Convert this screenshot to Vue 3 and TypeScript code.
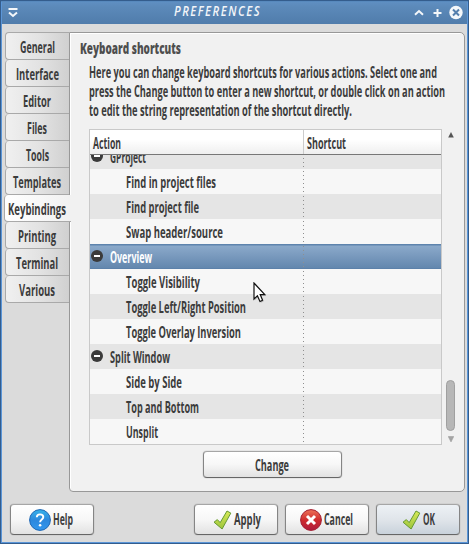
<script setup lang="ts">
import { h } from 'vue'

interface Tab { name: string; width: number }
interface Row { name: string; width: number; group?: boolean; selected?: boolean }

/** Condensed text line: squeezed to the given width, baseline 15.5px below its top. */
const Label = (props: { text: string; w: number }) =>
  h('svg', { class: 'label', width: props.w, height: 20 }, [
    h('text', { x: 0, y: 15.5, textLength: props.w, lengthAdjust: 'spacingAndGlyphs' }, props.text),
  ])
Label.props = ['text', 'w']

const tabs: Tab[] = [
  { name: 'General', width: 35 },
  { name: 'Interface', width: 43 },
  { name: 'Editor', width: 28 },
  { name: 'Files', width: 20 },
  { name: 'Tools', width: 23 },
  { name: 'Templates', width: 48 },
  { name: 'Keybindings', width: 58 },
  { name: 'Printing', width: 38 },
  { name: 'Terminal', width: 42 },
  { name: 'Various', width: 36 },
]

const intro: Tab[] = [
  { name: 'Here you can change keyboard shortcuts for various actions. Select one and', width: 348 },
  { name: 'press the Change button to enter a new shortcut, or double click on an action', width: 356 },
  { name: 'to edit the string representation of the shortcut directly.', width: 263 },
]

const rows: Row[] = [
  { name: 'GProject', width: 36, group: true },
  { name: 'Find in project files', width: 90 },
  { name: 'Find project file', width: 73 },
  { name: 'Swap header/source', width: 97 },
  { name: 'Overview', width: 42, group: true, selected: true },
  { name: 'Toggle Visibility', width: 74 },
  { name: 'Toggle Left/Right Position', width: 120 },
  { name: 'Toggle Overlay Inversion', width: 115 },
  { name: 'Split Window', width: 60, group: true },
  { name: 'Side by Side', width: 56 },
  { name: 'Top and Bottom', width: 73 },
  { name: 'Unsplit', width: 32 },
]
</script>

<template>
  <div class="window">
    <header class="titlebar">
      <svg class="menu" width="10" height="10" viewBox="0 0 10 10">
        <path d="M0.5 1H9.5" stroke="#f4f7fa" stroke-width="2" />
        <path d="M1 4.5L5 8L9 4.5" fill="none" stroke="#f4f7fa" stroke-width="2" />
      </svg>
      <Label class="caption" text="PREFERENCES" :w="87" />
      <svg class="controls" width="50" height="16" viewBox="0 0 50 16">
        <path d="M1 9.7L5 6L9 9.7" fill="none" stroke="#f4f7fa" stroke-width="2" />
        <path d="M19.5 8H27.5M23.5 4V12" stroke="#f4f7fa" stroke-width="2" />
        <circle cx="42" cy="7.5" r="6.7" fill="#f4f7fa" />
        <path d="M39 4.5L45 10.5M45 4.5L39 10.5" stroke="#557fad" stroke-width="2" />
      </svg>
    </header>

    <div class="notebook">
      <nav class="tabs">
        <div v-for="tab in tabs" :key="tab.name" class="tab" :class="{ active: tab.name === 'Keybindings' }">
          <Label :text="tab.name" :w="tab.width" />
        </div>
      </nav>

      <main class="panel">
        <Label class="heading" text="Keyboard shortcuts" :w="101" />
        <div class="intro">
          <Label v-for="line in intro" :key="line.name" :text="line.name" :w="line.width" />
        </div>

        <div class="list">
          <div class="table">
            <div class="thead">
              <div class="th first"><Label text="Action" :w="28" /></div>
              <div class="th"><Label text="Shortcut" :w="39" /></div>
            </div>
            <div class="tbody">
              <div v-for="row in rows" :key="row.name" class="row" :class="{ group: row.group, selected: row.selected }">
                <div class="cell">
                  <svg v-if="row.group" class="expander" width="12" height="12" viewBox="0 0 12 12">
                    <circle cx="6" cy="6" r="6" fill="#3b3b3b" />
                    <path d="M3 6H9" stroke="#fff" stroke-width="2" />
                  </svg>
                  <Label :text="row.name" :w="row.width" />
                </div>
              </div>
            </div>
          </div>
          <div class="scrollbar">
            <svg width="6" height="6" viewBox="0 0 6 6"><path d="M3 0L5.8 5.5H0.2Z" fill="#555" /></svg>
            <div class="thumb"></div>
            <svg width="6" height="6" viewBox="0 0 6 6"><path d="M0.2 0.5H5.8L3 6Z" fill="#a5a5a5" stroke="#8c8c8c" stroke-width=".4" /></svg>
          </div>
        </div>

        <button class="btn change"><Label text="Change" :w="34" /></button>
      </main>
    </div>

    <footer class="actions">
      <button class="btn help">
        <svg width="22" height="22" viewBox="0 0 22 22">
          <defs>
            <linearGradient id="blue" x2="0" y2="1">
              <stop offset="0" stop-color="#35b3ea" /><stop offset=".5" stop-color="#2d88dd" /><stop offset="1" stop-color="#3397ee" />
            </linearGradient>
          </defs>
          <circle cx="11" cy="11" r="10.4" fill="url(#blue)" stroke="#1d66b4" />
          <path d="M7.8 8.3C7.8 4.3 14.3 4.5 14.3 8.1C14.3 10.6 11.1 10.5 11.1 13.3" fill="none" stroke="#fff" stroke-width="1.9" />
          <circle cx="11.1" cy="16.2" r="1.3" fill="#fff" />
        </svg>
        <Label text="Help" :w="20" />
      </button>
      <button class="btn apply">
        <svg width="19" height="20" viewBox="0 0 19 20">
          <defs>
            <linearGradient id="green" x2="0" y2="1">
              <stop offset="0" stop-color="#d8ea58" /><stop offset="1" stop-color="#9cc43c" />
            </linearGradient>
          </defs>
          <path d="M1 12.2L4.3 9.6L7.2 12.6L14 1L17.8 3.1L9.1 19Z" fill="url(#green)" stroke="#669a34" stroke-linejoin="round" />
        </svg>
        <Label text="Apply" :w="27" />
      </button>
      <button class="btn cancel">
        <svg width="22" height="22" viewBox="0 0 22 22">
          <defs>
            <linearGradient id="red" x2="0" y2="1">
              <stop offset="0" stop-color="#ed7258" /><stop offset=".5" stop-color="#cf2b2e" /><stop offset="1" stop-color="#ad1b3d" />
            </linearGradient>
          </defs>
          <circle cx="11" cy="11" r="10.4" fill="url(#red)" stroke="#a31e31" />
          <path d="M7 7L15 15M15 7L7 15" stroke="#fff" stroke-width="3" />
        </svg>
        <Label text="Cancel" :w="29" />
      </button>
      <button class="btn ok">
        <svg width="19" height="20" viewBox="0 0 19 20">
          <path d="M1 12.2L4.3 9.6L7.2 12.6L14 1L17.8 3.1L9.1 19Z" fill="url(#green)" stroke="#669a34" stroke-linejoin="round" />
        </svg>
        <Label text="OK" :w="12" />
      </button>
    </footer>

    <svg class="pointer" width="15" height="23" viewBox="0 0 15 23">
      <path d="M1 1V17.5L4.4 14.3L7 20L9.8 18.8L7.3 13H12.2Z" transform="translate(.8 .8)" fill="#000" opacity=".2" />
      <path d="M1 1V17L4.4 13.8L7 19.5L9.6 18.3L7.2 12.6H11.8Z" fill="#fff" stroke="#111" stroke-width="1.2" />
    </svg>
  </div>
</template>

<style>
body { margin: 0; overflow: hidden; }
</style>

<style scoped>
.window {
  position: relative;
  box-sizing: border-box;
  width: 469px;
  height: 544px;
  display: flex;
  flex-direction: column;
  background: #dbdbdb;
  border: 1px solid #345d8d;
  box-shadow: inset 0 0 0 1px #5b96d8;
  font-family: "Open Sans", "Noto Sans", sans-serif;
  font-size: 15.5px;
  font-weight: 700;
}
.label { display: block; flex: none; overflow: visible; fill: #3c3c3c; }
.titlebar {
  flex: none;
  height: 23px;
  box-sizing: border-box;
  display: flex;
  align-items: flex-start;
  padding-left: 7px;
  background: linear-gradient(#5f8fc2, #5c8aba 20%, #507cab);
  border-top: 1px solid #5789bd;
  box-shadow: inset 1px 0 #5b96d8, inset -1px 0 #5b96d8;
}
.menu { margin-top: 6px; }
.caption { margin: -2px 0 0 156px; fill: #f2f5f9; font-size: 13.5px; font-style: italic; font-weight: 600; letter-spacing: 1.8px; }
.controls { margin: 3px 0 0 153px; }
.notebook { flex: none; display: flex; height: 460px; margin: 8px 3px 0 4px; }
.tabs { flex: none; width: 65px; position: relative; z-index: 1; }
.tab {
  box-sizing: border-box;
  width: 64px;
  height: 27px;
  display: flex;
  justify-content: center;
  padding: 4px 1px 0 0;
  border: solid #a9a9a9;
  border-width: 0 0 1px 1px;
  border-radius: 4px 0 0 4px;
  background: linear-gradient(90deg, #f0f0f0, #e2e2e2 55%, #d0d0d0);
}
.tab:first-child { height: 28px; border-top-width: 1px; }
.tab.active { width: 67px; margin-left: -1px; padding-right: 3px; background: linear-gradient(90deg, #fff, #f1f1f1); }
.panel {
  box-sizing: border-box;
  width: 396px;
  margin-left: -1px;
  padding-left: 10px;
  background: #f1f1f1;
  border: 1px solid #989898;
  border-radius: 0 5px 5px 4px;
  box-shadow: inset 1px 1px #fff;
}
.heading { margin-top: 5px; font-weight: 800; fill: #4e4e4e; }
.intro { margin: 4px 0 0 9px; }
.intro .label { height: 19px; }
.list { display: flex; margin: 10px 0 0 9px; }
.table { box-sizing: border-box; width: 353px; height: 316px; border: 1px solid #c9c9c9; }
.thead { display: flex; height: 24px; border-bottom: 1px solid #777; background: linear-gradient(#fff 40%, #efefef); }
.th { padding: 3px 0 0 3px; }
.th.first { box-sizing: border-box; width: 214px; border-right: 1px solid #ccc; }
.tbody { height: 289px; display: flex; flex-direction: column; justify-content: flex-end; overflow: hidden; }
.row { flex: none; height: 25px; background: #f7f7f7; }
.row:nth-child(odd) { background: #e5e5e5; }
.row:nth-child(5) { background: linear-gradient(#5e84ad 1px, #8ba9ca 2px, #6387ae 24px, #557ba5 25px); }
.cell {
  box-sizing: border-box;
  width: 214px;
  height: 25px;
  display: flex;
  padding: 3px 0 0 36px;
  background: repeating-linear-gradient(transparent 0 2px, #8f8f8f 2px 3px, transparent 3px 4px) right / 1px 100% no-repeat;
}
.group .cell { padding-left: 1px; }
.expander { margin: 3px 7px 0 0; }
.selected .label { fill: #fff; }
.scrollbar { display: flex; flex-direction: column; align-items: center; width: 9px; margin: 3px 0 0 4px; }
.scrollbar svg { flex: none; }
.thumb { box-sizing: border-box; flex: none; width: 9px; height: 51px; margin: 242px 0 5px; background: #b7b7b7; border: 1px solid #a0a0a0; border-radius: 5px; }
.btn {
  box-sizing: border-box;
  flex: none;
  display: flex;
  align-items: center;
  width: 84px;
  height: 31px;
  padding: 0;
  font: inherit;
  border: 1px solid #777;
  border-color: #a6a6a6 #858585 #666 #858585;
  border-radius: 4px;
  background: linear-gradient(#fff, #f7f7f7 50%, #e2e2e2);
  box-shadow: 0 0 1px #777;
}
.change { width: 139px; height: 27px; margin: 6px 0 0 123px; padding-left: 51px; }
.change .label { margin-top: 1px; }
.actions { display: flex; margin: 12px 0 0 9px; }
.actions .label { margin-top: -1px; }
.help { padding-left: 18px; gap: 2px; }
.apply { margin-left: 100px; padding-left: 18px; gap: 2px; }
.cancel { margin-left: 7px; padding-left: 14px; gap: 2px; }
.ok { margin-left: 7px; padding-left: 25px; gap: 2px; background: linear-gradient(#edf1f5, #e0e5ea 50%, #c9d2db); }
.pointer { position: absolute; left: 252px; top: 281px; }
</style>
